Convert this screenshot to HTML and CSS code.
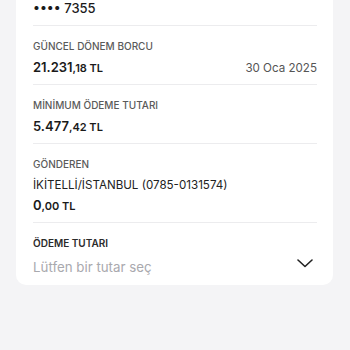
FILE: index.html
```html
<!DOCTYPE html>
<html lang="tr">
<head>
<meta charset="utf-8">
<link rel="stylesheet" href="styles.css">
</head>
<body>
<div class="page">
  <div class="card">
    <div class="row first">
      <div class="value plain">•••• 7355</div>
    </div>
    <div class="row">
      <div class="label">GÜNCEL DÖNEM BORCU</div>
      <div class="line">
        <div class="value"><span class="big">21.231</span><span class="small">,18 TL</span></div>
        <div class="date">30 Oca 2025</div>
      </div>
    </div>
    <div class="row">
      <div class="label">MİNİMUM ÖDEME TUTARI</div>
      <div class="value"><span class="big">5.477</span><span class="small">,42 TL</span></div>
    </div>
    <div class="row">
      <div class="label">GÖNDEREN</div>
      <div class="address">İKİTELLİ/İSTANBUL (0785-0131574)</div>
      <div class="value"><span class="big">0</span><span class="small">,00 TL</span></div>
    </div>
    <div class="row last">
      <div class="label dark">ÖDEME TUTARI</div>
      <div class="line">
        <div class="placeholder">Lütfen bir tutar seç</div>
        <svg class="chev" width="16" height="9" viewBox="0 0 16 9"><path d="M1 1 L8 7.5 L15 1" fill="none" stroke="#222" stroke-width="1.6" stroke-linecap="round" stroke-linejoin="round"/></svg>
      </div>
    </div>
  </div>
</div>
</body>
</html>
```

FILE: styles.css
```css
* { box-sizing: border-box; }
html, body { margin: 0; padding: 0; }
body {
  background: #f4f4f6;
  font-family: Inter, "Noto Sans", sans-serif;
  color: #1f1f1f;
  width: 350px;
  height: 350px;
}
.page {
  padding: 0 17px 0 16px;
}
.card {
  background: #fff;
  border-radius: 0 0 10px 10px;
  padding: 0 16px 0 17px;
}
.row {
  border-bottom: 1px solid #ececee;
  padding: 14px 0 8px;
}
.row.first {
  padding: 0 0 9px;
}
.row.last {
  border-bottom: none;
  padding: 14px 0 9px;
}
.label {
  font-size: 10px;
  line-height: 12px;
  color: #5a5a5a;
  letter-spacing: 0;
  font-weight: 500;
  margin-bottom: 7px;
}
.label.dark {
  color: #2b2b2b;
  font-weight: 600;
  margin-bottom: 9px;
}
.line {
  display: flex;
  justify-content: space-between;
  align-items: center;
}
.value {
  font-size: 13px;
  line-height: 16px;
  font-weight: 600;
  color: #1a1a1a;
}
.value.plain {
  font-weight: 500;
}
.value .small {
  font-size: 11px;
}
.date {
  font-size: 11.6px;
  color: #555;
  line-height: 16px;
}
.address {
  font-size: 11.6px;
  line-height: 16px;
  color: #222;
  margin-bottom: 4px;
}
.placeholder {
  font-size: 13.3px;
  line-height: 18px;
  color: #a9a9ae;
}
.chev {
  margin-right: 4px;
  margin-top: -8px;
}
```
